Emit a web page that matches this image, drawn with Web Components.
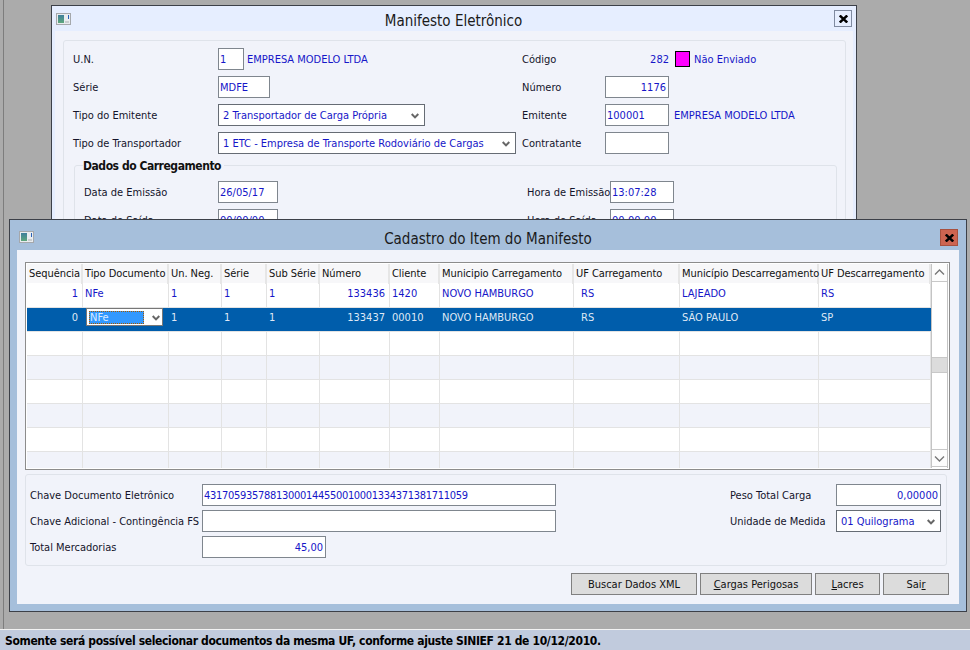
<!DOCTYPE html>
<html lang="pt"><head><meta charset="utf-8"><title>Manifesto</title>
<style>
html,body{margin:0;padding:0;background:#ababab}
body{font:11px/16px "DejaVu Sans Condensed","DejaVu Sans",sans-serif;font-stretch:condensed;color:#101020;width:970px;height:650px;overflow:hidden}
</style></head><body>
<x-desktop>
  <x-window title="Manifesto Eletrônico" style="left:51px;top:5px;width:806px;height:290px;--frame:#e6eeff;--title-h:25px;--side:3px;--title-size:15px;--title-shift:5px">
    <x-panel style="--cols:145px 304px 83px 1fr;margin:9px 7px 0 8px;--pad:7px 9px 0 9px;--gap:6px;height:200px">
      <x-row><x-label>U.N.</x-label><x-cell><x-box w="26">1</x-box><x-value style="margin-left:3px">EMPRESA MODELO LTDA</x-value></x-cell><x-label>Código</x-label><x-cell><x-value style="width:64px;text-align:right">282</x-value><x-swatch></x-swatch><x-value style="margin-left:4px">Não Enviado</x-value></x-cell></x-row>
      <x-row><x-label>Série</x-label><x-box w="52">MDFE</x-box><x-label>Número</x-label><x-box w="64" right>1176</x-box></x-row>
      <x-row><x-label>Tipo do Emitente</x-label><x-combo w="207">2 Transportador de Carga Própria</x-combo><x-label>Emitente</x-label><x-cell><x-box w="64">100001</x-box><x-value style="margin-left:5px">EMPRESA MODELO LTDA</x-value></x-cell></x-row>
      <x-row><x-label>Tipo de Transportador</x-label><x-combo w="298">1 ETC - Empresa de Transporte Rodoviário de Cargas</x-combo><x-label>Contratante</x-label><x-box w="64"></x-box></x-row>
      <x-group legend="Dados do Carregamento" style="--cols:134px 309px 83px 1fr">
        <x-row><x-label>Data de Emissão</x-label><x-box w="60">26/05/17</x-box><x-label>Hora de Emissão</x-label><x-box w="64">13:07:28</x-box></x-row>
        <x-row><x-label>Data de Saída</x-label><x-box w="60">00/00/00</x-box><x-label>Hora de Saída</x-label><x-box w="64">00:00:00</x-box></x-row>
      </x-group>
    </x-panel>
  </x-window>

  <x-window title="Cadastro do Item do Manifesto" danger style="left:9px;top:219px;width:958px;height:393px;--frame:#a6bfdb;--title-h:30px;--side:7px;--title-size:15px;--title-shift:8px">
    <x-stack>
      <x-grid>
        <x-grow head>
          <x-gcell>Sequência</x-gcell><x-gcell>Tipo Documento</x-gcell><x-gcell>Un. Neg.</x-gcell><x-gcell>Série</x-gcell><x-gcell>Sub Série</x-gcell><x-gcell>Número</x-gcell><x-gcell>Cliente</x-gcell><x-gcell>Municipio Carregamento</x-gcell><x-gcell>UF Carregamento</x-gcell><x-gcell>Município Descarregamento</x-gcell><x-gcell>UF Descarregamento</x-gcell>
        </x-grow>
        <x-grow>
          <x-gcell right>1</x-gcell><x-gcell>NFe</x-gcell><x-gcell>1</x-gcell><x-gcell>1</x-gcell><x-gcell>1</x-gcell><x-gcell right>133436</x-gcell><x-gcell>1420</x-gcell><x-gcell>NOVO HAMBURGO</x-gcell><x-gcell indent>RS</x-gcell><x-gcell>LAJEADO</x-gcell><x-gcell>RS</x-gcell>
        </x-grow>
        <x-grow selected>
          <x-gcell right>0</x-gcell><x-gcell><x-gridcombo>NFe</x-gridcombo></x-gcell><x-gcell>1</x-gcell><x-gcell>1</x-gcell><x-gcell>1</x-gcell><x-gcell right>133437</x-gcell><x-gcell>00010</x-gcell><x-gcell>NOVO HAMBURGO</x-gcell><x-gcell indent>RS</x-gcell><x-gcell>SÃO PAULO</x-gcell><x-gcell>SP</x-gcell>
        </x-grow>
        <x-grow></x-grow><x-grow alt></x-grow><x-grow></x-grow><x-grow alt></x-grow><x-grow></x-grow><x-grow alt></x-grow>
      </x-grid>
      <x-panel style="--cols:172px 528px 106px 105px;margin:4px 3px 0 0;--pad:9px 4px 7px 4px;--gap:4px">
        <x-row><x-label>Chave Documento Eletrônico</x-label><x-box w="354" style="letter-spacing:-.3px">43170593578813000144550010001334371381711059</x-box><x-label>Peso Total Carga</x-label><x-box w="105" right>0,00000</x-box></x-row>
        <x-row><x-label>Chave Adicional - Contingência FS</x-label><x-box w="354"></x-box><x-label>Unidade de Medida</x-label><x-combo w="105">01 Quilograma</x-combo></x-row>
        <x-row><x-label>Total Mercadorias</x-label><x-box w="124" right>45,00</x-box></x-row>
      </x-panel>
      <x-actions>
        <x-btn w="126">Buscar Dados XML</x-btn><x-btn w="112"><u>C</u>argas Perigosas</x-btn><x-btn w="65"><u>L</u>acres</x-btn><x-btn w="66">Sai<u>r</u></x-btn>
      </x-actions>
    </x-stack>
  </x-window>
  <x-status slot="status">Somente será possível selecionar documentos da mesma UF, conforme ajuste SINIEF 21 de 10/12/2010.</x-status>
</x-desktop>
<script>
const def=(name,css,html,init)=>customElements.define(name,class extends HTMLElement{
  constructor(){super();const s=this.attachShadow({mode:'open'});s.innerHTML=`<style>${css}</style>${html}`;}
  connectedCallback(){init&&init(this,this.shadowRoot);}
});
const chev=`<svg width="8" height="6" viewBox="0 0 8 6"><path d="M.7 1 4 4.4 7.3 1" fill="none" stroke="#666" stroke-width="2"/></svg>`;
const blue='#1616c8';
def('x-desktop',`:host{display:block;position:relative;width:970px;height:650px;overflow:hidden}
 .work{position:relative;height:629px;background:#ababab}
 .work::before{content:"";position:absolute;left:3px;top:0;bottom:0;width:1px;background:#7d7d7d}`,
 `<div class="work"><slot></slot></div><slot name="status"></slot>`);
def('x-status',`:host{display:block;height:21px;box-sizing:border-box;border-top:1px solid #f2f2f2;background:#c1cbdd;color:#000;font:bold 12px/22px "DejaVu Sans Condensed","DejaVu Sans",sans-serif;font-stretch:condensed;letter-spacing:-.35px;padding-left:5px;white-space:nowrap;overflow:hidden}`,`<slot></slot>`);
def('x-winicon',`:host{display:block;width:15px;height:12px}svg{display:block}`,
 `<svg width="15" height="12" viewBox="0 0 15 12"><rect x=".5" y=".5" width="14" height="11" fill="#e9ecef" stroke="#a5a8ac"/><defs><linearGradient id="g" x1="0" y1="0" x2="0" y2="1"><stop offset="0" stop-color="#3f7f9c"/><stop offset="1" stop-color="#5fa77c"/></linearGradient></defs><rect x="2" y="2" width="6" height="8" fill="url(#g)"/><rect x="12" y="2" width="1" height="4" fill="#2a62b8"/><rect x="9" y="8" width="4" height="2" fill="#c9cdd0"/></svg>`);
def('x-window',`:host{display:flex;flex-direction:column;position:absolute;box-sizing:border-box;border:1px solid #3c4048;background:var(--frame);overflow:hidden}
 .bar{height:var(--title-h);flex:none;display:flex;align-items:center;padding:0 4px;position:relative}
 .t{flex:1;text-align:center;font-size:var(--title-size);line-height:20px;color:#1a1a1a;margin-top:var(--title-shift);padding-left:2px}
 .close{width:18px;height:17px;box-sizing:border-box;border:1px solid #7f8aa0;display:flex;align-items:center;justify-content:center;align-self:flex-start;margin-top:4px;background:transparent}
 :host([danger]) .close{background:#cd6450;border-color:#a8503e;margin-top:9px;margin-right:4px}
 :host([danger]) .bar{padding:0 4px 0 9px}
 x-winicon{align-self:flex-start;margin-top:7px}
 :host([danger]) x-winicon{margin-top:11px}
 .client{flex:1;background:#f1f3fa;margin:0 var(--side) 7px;min-height:0;position:relative}`,
 `<div class="bar"><x-winicon></x-winicon><div class="t"></div><div class="close"><svg width="9" height="8" viewBox="0 0 9 8"><path d="M.8 .5 8.2 7.5M8.2 .5 .8 7.5" stroke="#000" stroke-width="2.4" fill="none"/></svg></div></div><div class="client"><slot></slot></div>`,
 (el,s)=>{s.querySelector('.t').textContent=el.getAttribute('title');el.removeAttribute('title');});
def('x-panel',`:host{display:flex;flex-direction:column;gap:var(--gap);padding:var(--pad);border:1px solid #dfe3ea;border-radius:3px;box-sizing:content-box}`,`<slot></slot>`);
def('x-row',`:host{display:grid;grid-template-columns:var(--cols);height:22px;align-items:center}`,`<slot></slot>`);
def('x-cell',`:host{display:flex;align-items:center}`,`<slot></slot>`);
def('x-label',`:host{display:block;white-space:nowrap;color:#14142a;line-height:16px;margin-top:2px}`,`<slot></slot>`);
def('x-value',`:host{display:block;white-space:nowrap;color:${blue};margin-top:2px}`,`<slot></slot>`);
def('x-swatch',`:host{display:block;width:15px;height:16px;box-sizing:border-box;background:#ff00ff;border:1px solid #000;margin-left:6px}`,``);
def('x-box',`:host{display:block;box-sizing:border-box;height:22px;border:1px solid #7f868e;background:#fff;color:${blue};padding:1px 2px 0 1px;line-height:20px;white-space:nowrap;overflow:hidden}
 :host([right]){text-align:right}`,`<slot></slot>`,(el)=>{el.style.width=el.getAttribute('w')+'px';});
def('x-combo',`:host{display:flex;align-items:center;justify-content:space-between;box-sizing:border-box;height:22px;border:1px solid #666c74;background:#fff;color:${blue};padding:2px 5px 0 4px;white-space:nowrap}svg{display:block;flex:none}`,`<slot></slot>${chev}`,(el)=>{el.style.width=el.getAttribute('w')+'px';});
def('x-group',`:host{display:block}
 fieldset{margin:-3px 0 0 1px;padding:8px 0 0 9px;border:1px solid #dfe3ea;border-radius:3px;min-width:0;width:752px}
 legend{padding:2px 3px 0 0;margin-left:-1px;font-weight:bold;color:#111;line-height:14px;font-size:12px;letter-spacing:-.45px}
 .rows{display:flex;flex-direction:column;gap:6px}`,
 `<fieldset><legend></legend><div class="rows"><slot></slot></div></fieldset>`,(el,s)=>{s.querySelector('legend').textContent=el.getAttribute('legend');});
def('x-stack',`:host{display:flex;flex-direction:column;padding:12px 9px 0 8px}`,`<slot></slot>`);
def('x-grid',`:host{display:block;box-sizing:border-box;height:208px;border:1px solid #8c8c8c;padding:1px;background:#fff;position:relative;overflow:hidden}
 .wrap{display:flex;height:100%}
 .rows{width:904px;flex:none;overflow:hidden;--gridcols:56px 86px 53px 45px 53px 70px 50px 134px 106px 139px 112px}
 .sb{width:17px;box-sizing:border-box;border:1px solid #c4c4c4;border-width:0 1px;display:flex;flex-direction:column;background:#fff}
 .b{height:17px;flex:none;display:flex;align-items:center;justify-content:center;border-bottom:1px solid #c8c8c8;background:#fcfcfc}
 .b.d{border:1px solid #c8c8c8;border-width:1px 0;height:16px;margin-top:auto;margin-bottom:1px}
 .th{height:16px;background:#dcdcdc;margin-top:75px;border:1px solid #c8c8c8;border-width:1px 0;box-sizing:border-box}
 path{fill:none;stroke:#777;stroke-width:1.4}`,
 `<div class="wrap"><div class="rows"><slot></slot></div><div class="sb"><div class="b"><svg width="11" height="7" viewBox="0 0 11 7"><path d="M1 5.5 5.5 1 10 5.5"/></svg></div><div class="th"></div><div class="b d"><svg width="11" height="7" viewBox="0 0 11 7"><path d="M1 1.5 5.5 6 10 1.5"/></svg></div></div></div>`);
def('x-grow',`:host{display:grid;grid-template-columns:var(--gridcols);height:24px;box-sizing:border-box;border-bottom:1px solid #e3e3e3;background:#fff;color:${blue};--line:#e3e3e3}
 :host([alt]){background:#f1f3fa}
 :host([selected]){background:#005dab;color:#dfe8f5;--line:transparent}
 :host([head]){height:20px;background:#f7f7f9;color:#111;border-bottom:1px solid #fff;--line:#e6e6e6;--lw:2px;--hp:2px;letter-spacing:-.06px}`,
 `<slot><x-gcell></x-gcell><x-gcell></x-gcell><x-gcell></x-gcell><x-gcell></x-gcell><x-gcell></x-gcell><x-gcell></x-gcell><x-gcell></x-gcell><x-gcell></x-gcell><x-gcell></x-gcell><x-gcell></x-gcell><x-gcell></x-gcell></slot>`);
def('x-gcell',`:host{display:block;box-sizing:border-box;line-height:20px;padding:0 0 0 var(--hp,2px);border-right:var(--lw,1px) solid var(--line);white-space:nowrap}
 :host([right]){text-align:right;padding-right:4px}
 :host([indent]){padding-left:7px}`,`<slot></slot>`);
def('x-gridcombo',`:host{display:flex;align-items:center;box-sizing:border-box;height:18px;width:77px;margin-left:1px;border:1px solid #777;background:#fff;padding:0 0 0 2px;line-height:13px}
 .v{width:55px;height:13px;box-sizing:border-box;background:#3399ff;color:#dceaff;outline:1px dotted #a55a00;outline-offset:-1px;padding-left:1px}
 svg{margin-left:8px;margin-top:1px;flex:none}`,`<div class="v"><slot></slot></div>${chev}`);
def('x-actions',`:host{display:flex;justify-content:flex-end;gap:3px;margin-top:7px;margin-right:1px}`,`<slot></slot>`);
def('x-btn',`:host{display:block;box-sizing:border-box;height:22px;border:1px solid #808080;background:#dcdcdc;color:#111;text-align:center;line-height:22px}`,`<slot></slot>`,(el)=>{el.style.width=el.getAttribute('w')+'px';});
</script>
</body></html>
